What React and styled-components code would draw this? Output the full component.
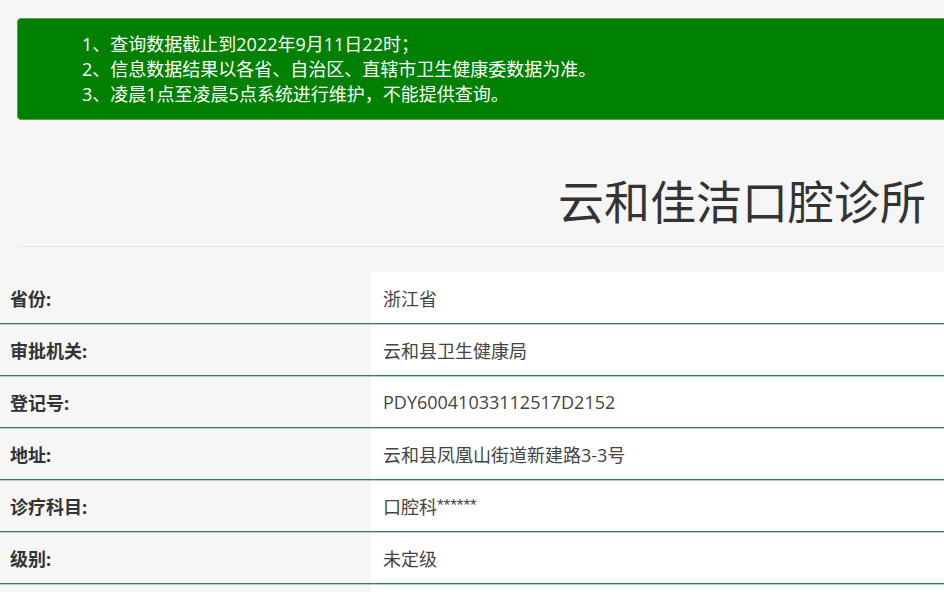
import styled, { createGlobalStyle } from "styled-components";

const GlobalStyle = createGlobalStyle`
  body {
    margin: 0;
    background: #f6f6f6;
    overflow: hidden;
    font-family: "Open Sans", "Noto Sans CJK SC", sans-serif;
  }
`;

const Page = styled.div`
  width: 944px;
`;

const Notice = styled.div`
  margin: 18px -20px 0 17px;
  padding: 13px 0 12px 64px;
  background: #008000;
  border: 1px solid #5aa04a;
  border-radius: 4px;
  color: #fff;
  font-size: 18px;
  line-height: 25px;
`;

const Line = styled.div`
  white-space: nowrap;
`;

const Title = styled.h1`
  margin: 48px 0 0;
  padding-right: 18px;
  text-align: right;
  font-size: 46px;
  font-weight: 400;
  line-height: 66px;
  color: #333;
`;

const Rule = styled.div`
  margin: 12px 0 25px 17px;
  height: 1px;
  background: #e8e8e8;
`;

const Row = styled.div`
  position: relative;
  display: grid;
  grid-template-columns: 371px 1fr;
  height: 51px;
  border-bottom: 1px solid #3a7866;
  box-shadow: 0 1px 0 #b4d0c4;
  font-size: 18px;
`;

const Label = styled.div`
  display: flex;
  align-items: center;
  padding-left: 10px;
  background: #f6f6f6;
  color: #333;
  font-size: 18px;
  font-weight: 700;
`;

const Value = styled.div`
  display: flex;
  align-items: center;
  padding-left: 12px;
  background: #fff;
  color: #444;
`;

const Stars = styled.span`
  font-family: "Liberation Sans", sans-serif;
  font-size: 17px;
`;

const notes = [
  "1、查询数据截止到2022年9月11日22时；",
  "2、信息数据结果以各省、自治区、直辖市卫生健康委数据为准。",
  "3、凌晨1点至凌晨5点系统进行维护，不能提供查询。",
];

const rows = [
  ["省份:", "浙江省"],
  ["审批机关:", "云和县卫生健康局"],
  ["登记号:", "PDY60041033112517D2152"],
  ["地址:", "云和县凤凰山街道新建路3-3号"],
  ["诊疗科目:", <>口腔科<Stars>******</Stars></>],
  ["级别:", "未定级"],
  ["", ""],
];

export default function App() {
  return (
    <Page>
      <GlobalStyle />
      <Notice>
        {notes.map((n) => (
          <Line key={n}>{n}</Line>
        ))}
      </Notice>
      <Title>云和佳洁口腔诊所</Title>
      <Rule />
      {rows.map(([k, v], i) => (
        <Row key={i} style={{ zIndex: rows.length - i }}>
          <Label>{k}</Label>
          <Value>{v}</Value>
        </Row>
      ))}
    </Page>
  );
}
